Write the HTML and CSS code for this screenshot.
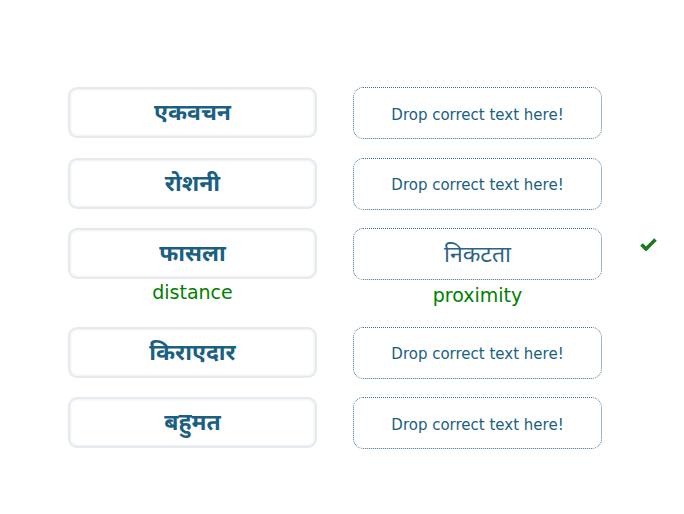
FILE: index.html
```html
<!DOCTYPE html>
<html>
<head>
<meta charset="utf-8">
<link rel="stylesheet" href="styles.css">
</head>
<body>
<div class="board">
  <div class="row">
    <div class="cell"><div class="word">एकवचन</div></div>
    <div class="cell"><div class="drop">Drop correct text here!</div></div>
    <div class="mark"></div>
  </div>
  <div class="row">
    <div class="cell"><div class="word">रोशनी</div></div>
    <div class="cell"><div class="drop">Drop correct text here!</div></div>
    <div class="mark"></div>
  </div>
  <div class="row">
    <div class="cell"><div class="word">फासला</div><div class="meaning">distance</div></div>
    <div class="cell"><div class="drop filled">निकटता</div><div class="meaning right">proximity</div></div>
    <div class="mark">
      <svg class="check" width="17" height="13" viewBox="0 0 17 13"><path d="M1.5 6.5 L6 11 L15.5 1.5" fill="none" stroke="#1b7a1b" stroke-width="3.6" stroke-linejoin="miter"/></svg>
    </div>
  </div>
  <div class="row">
    <div class="cell"><div class="word">किराएदार</div></div>
    <div class="cell"><div class="drop">Drop correct text here!</div></div>
    <div class="mark"></div>
  </div>
  <div class="row">
    <div class="cell"><div class="word">बहुमत</div></div>
    <div class="cell"><div class="drop">Drop correct text here!</div></div>
    <div class="mark"></div>
  </div>
</div>
</body>
</html>
```
FILE: styles.css
```css
html, body {
  margin: 0;
  padding: 0;
  background: #ffffff;
}
.board {
  padding: 87px 0 0 68px;
  display: flex;
  flex-direction: column;
  gap: 18.5px;
}
.row {
  display: flex;
  align-items: flex-start;
  gap: 36px;
}
.cell {
  width: 249px;
  display: flex;
  flex-direction: column;
}
.word {
  box-sizing: border-box;
  height: 51px;
  border: 2px solid #e5eaee;
  border-radius: 9px;
  box-shadow: inset 0 0 3px rgba(170, 195, 212, 0.45);
  display: flex;
  align-items: center;
  justify-content: center;
  font-family: "Noto Sans", "Noto Sans Devanagari", sans-serif;
  font-weight: bold;
  font-size: 23px;
  color: #1b5f82;
  padding-bottom: 3px;
}
.drop {
  box-sizing: border-box;
  height: 52px;
  border: 1px dotted #3f7090;
  border-radius: 10px;
  display: flex;
  align-items: center;
  justify-content: center;
  font-family: "DejaVu Sans", sans-serif;
  font-size: 15px;
  color: #1b5f82;
  padding-top: 3px;
}
.drop.filled {
  font-family: "Noto Sans", "Noto Sans Devanagari", sans-serif;
  font-size: 23px;
  color: #2a6585;
  padding-top: 0;
  padding-bottom: 2px;
}
.meaning {
  text-align: center;
  font-family: "DejaVu Sans", sans-serif;
  font-size: 19px;
  color: #008000;
  line-height: 26px;
}
.meaning.right {
  margin-top: 2px;
}
.mark {
  padding-top: 10px;
  margin-left: 2px;
}
.check {
  display: block;
}
```
